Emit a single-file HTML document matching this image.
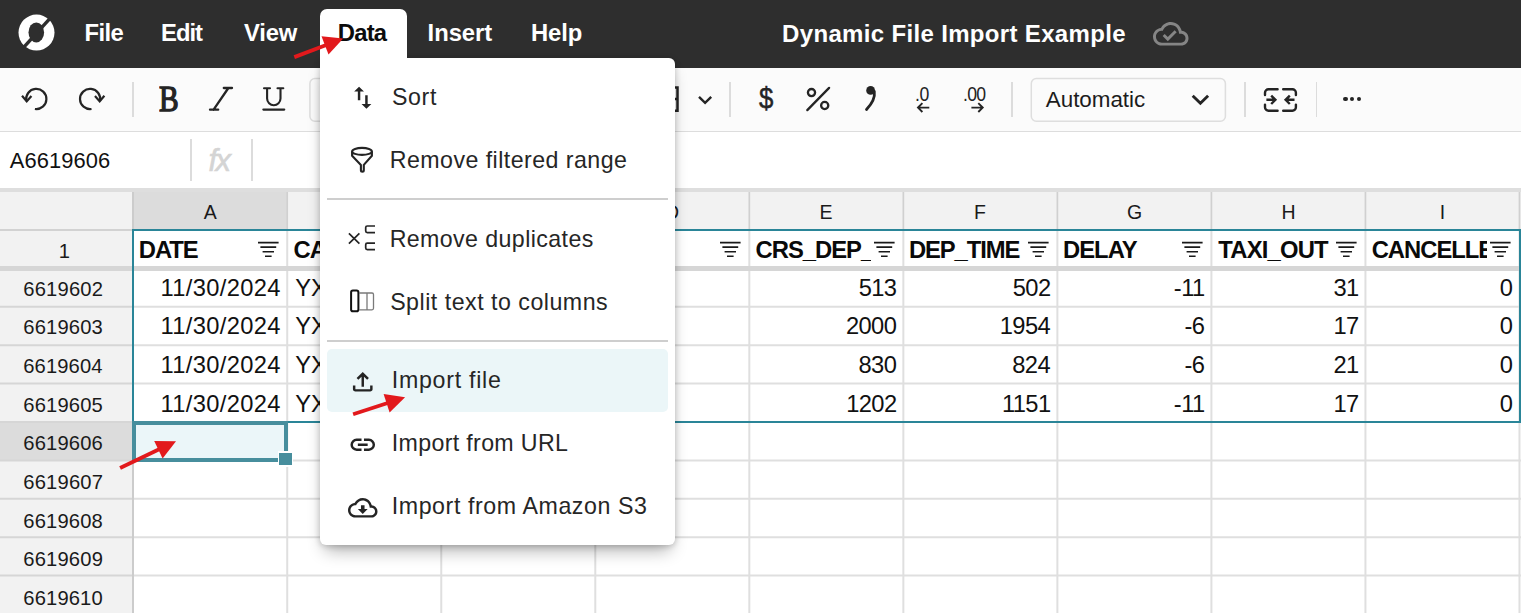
<!DOCTYPE html>
<html><head><meta charset="utf-8"><title>Dynamic File Import Example</title>
<style>
html,body{margin:0;padding:0;background:#fff;}
body{width:1521px;height:613px;overflow:hidden;position:relative;font-family:"Liberation Sans",sans-serif;}
.r{position:absolute;display:block;}
.t{position:absolute;white-space:nowrap;}
</style></head><body>
<div class="r" style="left:0px;top:0px;width:1521px;height:68px;background:#2e2e2e;"></div>
<svg class="r" style="left:16px;top:12px" width="42" height="42" viewBox="0 0 42 42">
<circle cx="20.5" cy="20.6" r="18" fill="#fff"/>
<ellipse cx="20.3" cy="20.4" rx="7.8" ry="10" fill="#2e2e2e"/>
<path d="M6.3 36.8 L34.7 5.6" stroke="#2e2e2e" stroke-width="3.4" fill="none"/>
</svg>
<div class="r" style="left:320px;top:9px;width:87px;height:62px;background:#fff;border-radius:7px 7px 0 0;"></div>
<div class="t" style="left:84.45px;top:17.00px;height:31px;line-height:31px;font-size:23.8px;color:#fff;font-weight:700;letter-spacing:-0.525px;">File</div>
<div class="t" style="left:161.05px;top:17.00px;height:31px;line-height:31px;font-size:23.8px;color:#fff;font-weight:700;letter-spacing:-1.013px;">Edit</div>
<div class="t" style="left:243.98px;top:17.00px;height:31px;line-height:31px;font-size:23.8px;color:#fff;font-weight:700;letter-spacing:-0.143px;">View</div>
<div class="t" style="left:337.85px;top:17.00px;height:31px;line-height:31px;font-size:23.8px;color:#0c0c0c;font-weight:700;letter-spacing:-0.773px;">Data</div>
<div class="t" style="left:427.55px;top:17.00px;height:31px;line-height:31px;font-size:23.8px;color:#fff;font-weight:700;letter-spacing:-0.022px;">Insert</div>
<div class="t" style="left:531.05px;top:17.00px;height:31px;line-height:31px;font-size:23.8px;color:#fff;font-weight:700;letter-spacing:-0.109px;">Help</div>
<div class="t" style="left:782.04px;top:18.00px;height:31px;line-height:31px;font-size:24px;color:#fff;font-weight:700;letter-spacing:0.338px;">Dynamic File Import Example</div>
<svg class="r" style="left:1153.3px;top:16.1px" width="35.5" height="35.5" viewBox="0 0 24 24" fill="#858585">
<path d="M19.35 10.04C18.67 6.59 15.64 4 12 4 9.11 4 6.6 5.64 5.35 8.04 2.34 8.36 0 10.91 0 14c0 3.31 2.69 6 6 6h13c2.76 0 5-2.24 5-5 0-2.64-2.05-4.78-4.65-4.96zM19 18H6c-2.21 0-4-1.79-4-4 0-2.05 1.53-3.76 3.56-3.97l1.07-.11.5-.95C8.08 7.14 9.94 6 12 6c2.62 0 4.88 1.86 5.39 4.43l.3 1.5 1.53.11c1.56.1 2.78 1.41 2.78 2.96 0 1.65-1.35 3-3 3zm-9-3.82l-2.090-2.090L6.5 13.5 10 17l6.010-6.010-1.410-1.410z"/>
</svg>
<div class="r" style="left:0px;top:68px;width:1521px;height:63px;background:#fbfbfb;"></div>
<div class="r" style="left:0px;top:131px;width:1521px;height:1px;background:#dddddd;"></div>
<div class="r" style="left:0px;top:132px;width:1521px;height:56px;background:#fff;"></div>
<div class="r" style="left:132.3px;top:82.2px;width:1.6px;height:34.6px;background:#dcdcdc;"></div>
<div class="r" style="left:729.1px;top:82.2px;width:1.6px;height:34.6px;background:#dcdcdc;"></div>
<div class="r" style="left:1011.2px;top:82.2px;width:1.6px;height:34.6px;background:#dcdcdc;"></div>
<div class="r" style="left:1244.3px;top:82.2px;width:1.6px;height:34.6px;background:#dcdcdc;"></div>
<div class="r" style="left:1315.9px;top:82.2px;width:1.4px;height:34.6px;background:#dcdcdc;"></div>
<svg class="r" style="left:0;top:68px" width="140" height="63" viewBox="0 68 140 63" fill="none" stroke="#242424" stroke-width="2.2" stroke-linecap="butt" stroke-linejoin="miter"><path d="M26.42 101.10 A10.1 10.1 0 1 1 34.89 109.00"/><path d="M22.02 95.80 L26.72 101.40 L31.42 96.10"/><path d="M99.98 101.10 A10.1 10.1 0 1 0 91.51 109.00"/><path d="M104.38 95.80 L99.68 101.40 L94.98 96.10"/></svg>
<div class="t" style="left:159.42px;top:76.00px;height:46px;line-height:46px;font-size:35.5px;color:#242424;font-family:'Liberation Serif',serif;transform:scaleX(.83);transform-origin:0 0;-webkit-text-stroke:1.4px #242424;">B</div>
<svg class="r" style="left:200px;top:80px" width="100" height="40" viewBox="200 80 100 40" fill="none" stroke="#242424" stroke-width="2.3" stroke-linecap="round">
<path d="M223.8 88 H232 M210 109.7 H218.2 M228.4 88 L213.6 109.7"/>
<path d="M267.1 88.3 V98.6 a6.7 6.7 0 0 0 13.4 0 V88.3 M264 88.3 H270 M277.5 88.3 H283.3" stroke-width="2.1"/>
<path d="M263.4 109.6 H284.2"/>
</svg>
<svg class="r" style="left:305px;top:74px" width="100" height="52" viewBox="305 74 100 52" fill="none" stroke="#dedede" stroke-width="1.5"><rect x="309.900" y="78.500" width="150" height="42.800" rx="5"/></svg>
<svg class="r" style="left:650px;top:80px" width="70" height="40" viewBox="650 80 70 40" fill="none" stroke="#242424" stroke-width="2.5" stroke-linejoin="miter">
<path d="M655 87.4 H677.5 V110.7 H655 M666 99.1 H677.5"/>
<path d="M699 96.8 L705.1 102.8 L711.2 96.8" stroke-width="2.4"/>
</svg>
<div class="t" style="left:758.90px;top:78.00px;height:39px;line-height:39px;font-size:30px;color:#242424;transform:scaleX(.86);transform-origin:0 0;-webkit-text-stroke:.5px #242424;">$</div>
<svg class="r" style="left:800px;top:80px" width="40" height="40" viewBox="800 80 40 40" fill="none" stroke="#242424" stroke-width="2.3" stroke-linecap="round">
<path d="M807.3 110.1 L829.1 87.9"/><circle cx="811.5" cy="92.6" r="3.6"/><circle cx="824.7" cy="105.5" r="3.6"/>
</svg>
<svg class="r" style="left:855px;top:80px" width="30" height="40" viewBox="855 80 30 40" fill="none" stroke="#242424" stroke-width="2.8" stroke-linecap="round">
<circle cx="870.6" cy="90.4" r="4.4" fill="#242424" stroke="none"/>
<path d="M874.3 91.500 C875.2 97.500 871.700 104 866.500 109.500"/>
</svg>
<div class="t" style="left:915.11px;top:80.00px;height:27px;line-height:27px;font-size:21px;color:#242424;letter-spacing:-0.400px;transform:scaleX(.84);transform-origin:0 0;">.0</div>
<div class="t" style="left:963.21px;top:80.00px;height:27px;line-height:27px;font-size:21px;color:#242424;letter-spacing:-0.900px;transform:scaleX(.84);transform-origin:0 0;">.00</div>
<svg class="r" style="left:910px;top:100px" width="90" height="16" viewBox="910 100 90 16" fill="none" stroke="#242424" stroke-width="1.9" stroke-linecap="butt" stroke-linejoin="miter">
<path d="M929.3 107.6 H918.4 M922.4 103.2 L918 107.6 L922.4 112"/>
<path d="M971.4 107.6 H982.3 M978.3 103.2 L982.7 107.6 L978.3 112"/>
</svg>
<svg class="r" style="left:1025px;top:74px" width="210" height="52" viewBox="1025 74 210 52" fill="none" stroke="#dedede" stroke-width="1.5"><rect x="1031.300" y="78.500" width="194.100" height="42.800" rx="5"/></svg>
<div class="t" style="left:1045.80px;top:85.00px;height:29px;line-height:29px;font-size:22.4px;color:#1c1c1c;letter-spacing:-0.020px;">Automatic</div>
<svg class="r" style="left:1185px;top:88px" width="30" height="24" viewBox="1185 88 30 24" fill="none" stroke="#242424" stroke-width="2.9" stroke-linejoin="miter">
<path d="M1192.7 95.8 L1200.4 103.3 L1208.1 95.8"/></svg>
<svg class="r" style="left:1260px;top:84px" width="42" height="32" viewBox="1260 84 42 32" fill="none" stroke="#242424" stroke-width="2.4" stroke-linecap="round" stroke-linejoin="round">
<path d="M1277.6 89.2 H1268.5 a3.5 3.5 0 0 0 -3.5 3.5 V95 M1265 104.6 V107.2 a3.5 3.5 0 0 0 3.500 3.500 H1277.6 M1283.2 89.2 H1292.4 a3.5 3.5 0 0 1 3.500 3.500 V95 M1295.900 104.600 V107.200 a3.500 3.500 0 0 1 -3.500 3.500 H1283.2"/>
<path d="M1266.4 99.8 H1275 M1271.2 95.600 L1275.400 99.800 L1271.200 104 M1294.5 99.8 H1286 M1289.8 95.600 L1285.600 99.800 L1289.800 104" stroke-linecap="butt" stroke-linejoin="miter"/>
</svg>
<div class="r" style="left:1343.2px;top:96.7px;width:4.6px;height:4.6px;background:#242424;border-radius:50%;"></div>
<div class="r" style="left:1349.8px;top:96.7px;width:4.6px;height:4.6px;background:#242424;border-radius:50%;"></div>
<div class="r" style="left:1356.5px;top:96.7px;width:4.6px;height:4.6px;background:#242424;border-radius:50%;"></div>
<div class="t" style="left:9.80px;top:147.00px;height:28px;line-height:28px;font-size:21.9px;color:#111;letter-spacing:0.067px;">A6619606</div>
<div class="r" style="left:190.1px;top:139.3px;width:1.5px;height:41.4px;background:#dcdcdc;"></div>
<div class="r" style="left:251.4px;top:139.3px;width:1.5px;height:41.4px;background:#dcdcdc;"></div>
<div class="t" style="left:208.39px;top:141.00px;height:40px;line-height:40px;font-size:31px;color:#d4d4d4;font-style:italic;letter-spacing:-1.525px;-webkit-text-stroke:.6px #d4d4d4;">fx</div>
<div class="r" style="left:0px;top:188px;width:1521px;height:4px;background:#dedede;"></div>
<div class="r" style="left:0px;top:192px;width:1521px;height:421px;background:#fff;"></div>
<div class="r" style="left:0px;top:192px;width:132.4px;height:421px;background:#f2f2f2;"></div>
<div class="r" style="left:0px;top:192px;width:1521px;height:37px;background:#f2f2f2;"></div>
<div class="r" style="left:133px;top:192px;width:154.5px;height:37px;background:#dcdcdc;"></div>
<div class="r" style="left:0px;top:422px;width:132.4px;height:38.5px;background:#dcdcdc;"></div>
<svg class="r" style="left:0;top:0" width="1521" height="613" viewBox="0 0 1521 613" fill="none" stroke-width="2"><path d="M132 306.80 H1521" stroke="#dfdfdf"/><path d="M0 306.80 H132" stroke="#d6d6d6"/><path d="M132 345.20 H1521" stroke="#dfdfdf"/><path d="M0 345.20 H132" stroke="#d6d6d6"/><path d="M132 383.60 H1521" stroke="#dfdfdf"/><path d="M0 383.60 H132" stroke="#d6d6d6"/><path d="M132 422.00 H1521" stroke="#dfdfdf"/><path d="M0 422.00 H132" stroke="#d6d6d6"/><path d="M132 460.40 H1521" stroke="#dfdfdf"/><path d="M0 460.40 H132" stroke="#d6d6d6"/><path d="M132 498.80 H1521" stroke="#dfdfdf"/><path d="M0 498.80 H132" stroke="#d6d6d6"/><path d="M132 537.20 H1521" stroke="#dfdfdf"/><path d="M0 537.20 H132" stroke="#d6d6d6"/><path d="M132 575.60 H1521" stroke="#dfdfdf"/><path d="M0 575.60 H132" stroke="#d6d6d6"/><path d="M132 614.00 H1521" stroke="#dfdfdf"/><path d="M0 614.00 H132" stroke="#d6d6d6"/><path d="M287.23 231 V613" stroke="#dfdfdf"/><path d="M287.23 192 V229" stroke="#d0d0d0" stroke-width="1.7"/><path d="M441.26 231 V613" stroke="#dfdfdf"/><path d="M441.26 192 V229" stroke="#d0d0d0" stroke-width="1.7"/><path d="M595.29 231 V613" stroke="#dfdfdf"/><path d="M595.29 192 V229" stroke="#d0d0d0" stroke-width="1.7"/><path d="M749.32 231 V613" stroke="#dfdfdf"/><path d="M749.32 192 V229" stroke="#d0d0d0" stroke-width="1.7"/><path d="M903.35 231 V613" stroke="#dfdfdf"/><path d="M903.35 192 V229" stroke="#d0d0d0" stroke-width="1.7"/><path d="M1057.38 231 V613" stroke="#dfdfdf"/><path d="M1057.38 192 V229" stroke="#d0d0d0" stroke-width="1.7"/><path d="M1211.41 231 V613" stroke="#dfdfdf"/><path d="M1211.41 192 V229" stroke="#d0d0d0" stroke-width="1.7"/><path d="M1365.44 231 V613" stroke="#dfdfdf"/><path d="M1365.44 192 V229" stroke="#d0d0d0" stroke-width="1.7"/><path d="M1519.47 231 V613" stroke="#dfdfdf"/><path d="M1519.47 192 V229" stroke="#d0d0d0" stroke-width="1.7"/></svg>
<div class="r" style="left:0px;top:229px;width:133px;height:2px;background:#d2d2d2;"></div>
<div class="r" style="left:132px;top:192px;width:2px;height:421px;background:#cccccc;"></div>
<div class="r" style="left:0px;top:266px;width:1521px;height:4.9px;background:#d6d6d6;"></div>
<div class="r" style="left:132px;top:229px;width:1389px;height:194px;background:transparent;border:2px solid #2a8598;box-sizing:border-box;"></div>
<div class="r" style="left:132px;top:421px;width:156px;height:41px;background:#ebf6f9;border:4px solid #478e9d;box-sizing:border-box;"></div>
<div class="r" style="left:278px;top:451px;width:15px;height:15.5px;background:#fff;"></div>
<div class="r" style="left:279px;top:453px;width:13px;height:12px;background:#478e9d;"></div>
<div class="t" style="left:203.73px;top:200.00px;height:25px;line-height:25px;font-size:19.5px;color:#1a1a1a;">A</div>
<div class="t" style="left:664.94px;top:200.00px;height:25px;line-height:25px;font-size:19.5px;color:#1a1a1a;">D</div>
<div class="t" style="left:819.46px;top:200.00px;height:25px;line-height:25px;font-size:19.5px;color:#1a1a1a;">E</div>
<div class="t" style="left:974.00px;top:200.00px;height:25px;line-height:25px;font-size:19.5px;color:#1a1a1a;">F</div>
<div class="t" style="left:1127.03px;top:200.00px;height:25px;line-height:25px;font-size:19.5px;color:#1a1a1a;">G</div>
<div class="t" style="left:1281.38px;top:200.00px;height:25px;line-height:25px;font-size:19.5px;color:#1a1a1a;">H</div>
<div class="t" style="left:1439.75px;top:200.00px;height:25px;line-height:25px;font-size:19.5px;color:#1a1a1a;">I</div>
<div class="t" style="left:58.69px;top:238.00px;height:26px;line-height:26px;font-size:20.2px;color:#1a1a1a;">1</div>
<div class="t" style="left:23.29px;top:276.00px;height:26px;line-height:26px;font-size:20.2px;color:#1a1a1a;letter-spacing:0.174px;">6619602</div>
<div class="t" style="left:23.29px;top:314.00px;height:26px;line-height:26px;font-size:20.2px;color:#1a1a1a;letter-spacing:0.157px;">6619603</div>
<div class="t" style="left:23.29px;top:353.00px;height:26px;line-height:26px;font-size:20.2px;color:#1a1a1a;letter-spacing:0.106px;">6619604</div>
<div class="t" style="left:23.29px;top:392.00px;height:26px;line-height:26px;font-size:20.2px;color:#1a1a1a;letter-spacing:0.148px;">6619605</div>
<div class="t" style="left:23.29px;top:430.00px;height:26px;line-height:26px;font-size:20.2px;color:#1a1a1a;letter-spacing:0.157px;">6619606</div>
<div class="t" style="left:23.29px;top:469.00px;height:26px;line-height:26px;font-size:20.2px;color:#1a1a1a;letter-spacing:0.174px;">6619607</div>
<div class="t" style="left:23.29px;top:508.00px;height:26px;line-height:26px;font-size:20.2px;color:#1a1a1a;letter-spacing:0.148px;">6619608</div>
<div class="t" style="left:23.29px;top:546.00px;height:26px;line-height:26px;font-size:20.2px;color:#1a1a1a;letter-spacing:0.165px;">6619609</div>
<div class="t" style="left:23.29px;top:585.00px;height:26px;line-height:26px;font-size:20.2px;color:#1a1a1a;letter-spacing:0.140px;">6619610</div>
<div class="t" style="left:138.85px;top:234.00px;height:31px;line-height:31px;width:115.55px;overflow:hidden;font-size:23.8px;font-weight:700;color:#0a0a0a;letter-spacing:-1.057px;">DATE</div>
<svg class="r" style="left:258.1px;top:240px" width="22" height="20" viewBox="0 0 22 20" stroke="#1a1a1a" stroke-width="1.6" fill="none"><path d="M0 2.6 H20.6 M2.4 7.1 H18.2 M4.6 11.7 H16 M7 16.2 H13.6"/></svg>
<div class="t" style="left:293.48px;top:234.00px;height:31px;line-height:31px;width:114.95px;overflow:hidden;font-size:23.8px;font-weight:700;color:#0a0a0a;letter-spacing:-1.000px;">CARRIER</div>
<svg class="r" style="left:412.1px;top:240px" width="22" height="20" viewBox="0 0 22 20" stroke="#1a1a1a" stroke-width="1.6" fill="none"><path d="M0 2.6 H20.6 M2.4 7.1 H18.2 M4.6 11.7 H16 M7 16.2 H13.6"/></svg>
<div class="t" style="left:447.51px;top:234.00px;height:31px;line-height:31px;width:114.95px;overflow:hidden;font-size:23.8px;font-weight:700;color:#0a0a0a;letter-spacing:-1.000px;">ORIGIN</div>
<svg class="r" style="left:566.2px;top:240px" width="22" height="20" viewBox="0 0 22 20" stroke="#1a1a1a" stroke-width="1.6" fill="none"><path d="M0 2.6 H20.6 M2.4 7.1 H18.2 M4.6 11.7 H16 M7 16.2 H13.6"/></svg>
<div class="t" style="left:600.94px;top:234.00px;height:31px;line-height:31px;width:115.55px;overflow:hidden;font-size:23.8px;font-weight:700;color:#0a0a0a;letter-spacing:-1.000px;">DEST</div>
<svg class="r" style="left:720.2px;top:240px" width="22" height="20" viewBox="0 0 22 20" stroke="#1a1a1a" stroke-width="1.6" fill="none"><path d="M0 2.6 H20.6 M2.4 7.1 H18.2 M4.6 11.7 H16 M7 16.2 H13.6"/></svg>
<div class="t" style="left:755.57px;top:234.00px;height:31px;line-height:31px;width:114.95px;overflow:hidden;font-size:23.8px;font-weight:700;color:#0a0a0a;letter-spacing:-1.000px;">CRS_DEP_T</div>
<svg class="r" style="left:874.2px;top:240px" width="22" height="20" viewBox="0 0 22 20" stroke="#1a1a1a" stroke-width="1.6" fill="none"><path d="M0 2.6 H20.6 M2.4 7.1 H18.2 M4.6 11.7 H16 M7 16.2 H13.6"/></svg>
<div class="t" style="left:909.00px;top:234.00px;height:31px;line-height:31px;width:115.55px;overflow:hidden;font-size:23.8px;font-weight:700;color:#0a0a0a;letter-spacing:-1.103px;">DEP_TIME</div>
<svg class="r" style="left:1028.2px;top:240px" width="22" height="20" viewBox="0 0 22 20" stroke="#1a1a1a" stroke-width="1.6" fill="none"><path d="M0 2.6 H20.6 M2.4 7.1 H18.2 M4.6 11.7 H16 M7 16.2 H13.6"/></svg>
<div class="t" style="left:1063.03px;top:234.00px;height:31px;line-height:31px;width:115.55px;overflow:hidden;font-size:23.8px;font-weight:700;color:#0a0a0a;letter-spacing:-0.994px;">DELAY</div>
<svg class="r" style="left:1182.3px;top:240px" width="22" height="20" viewBox="0 0 22 20" stroke="#1a1a1a" stroke-width="1.6" fill="none"><path d="M0 2.6 H20.6 M2.4 7.1 H18.2 M4.6 11.7 H16 M7 16.2 H13.6"/></svg>
<div class="t" style="left:1218.37px;top:234.00px;height:31px;line-height:31px;width:114.24px;overflow:hidden;font-size:23.8px;font-weight:700;color:#0a0a0a;letter-spacing:-0.813px;">TAXI_OUT</div>
<svg class="r" style="left:1336.3px;top:240px" width="22" height="20" viewBox="0 0 22 20" stroke="#1a1a1a" stroke-width="1.6" fill="none"><path d="M0 2.6 H20.6 M2.4 7.1 H18.2 M4.6 11.7 H16 M7 16.2 H13.6"/></svg>
<div class="t" style="left:1371.69px;top:234.00px;height:31px;line-height:31px;width:114.95px;overflow:hidden;font-size:23.8px;font-weight:700;color:#0a0a0a;letter-spacing:-1.000px;">CANCELLED</div>
<svg class="r" style="left:1490.3px;top:240px" width="22" height="20" viewBox="0 0 22 20" stroke="#1a1a1a" stroke-width="1.6" fill="none"><path d="M0 2.6 H20.6 M2.4 7.1 H18.2 M4.6 11.7 H16 M7 16.2 H13.6"/></svg>
<div class="t" style="left:160.52px;top:273.00px;height:31px;line-height:31px;font-size:23.7px;color:#111;letter-spacing:0.354px;">11/30/2024</div>
<div class="t" style="left:295.16px;top:273.00px;height:31px;line-height:31px;font-size:23.7px;color:#111;">YX</div>
<div class="t" style="left:858.64px;top:273.00px;height:31px;line-height:31px;font-size:23.7px;color:#111;letter-spacing:-0.600px;">513</div>
<div class="t" style="left:1012.79px;top:273.00px;height:31px;line-height:31px;font-size:23.7px;color:#111;letter-spacing:-0.600px;">502</div>
<div class="t" style="left:1173.87px;top:273.00px;height:31px;line-height:31px;font-size:23.7px;color:#111;letter-spacing:-0.600px;">-11</div>
<div class="t" style="left:1333.46px;top:273.00px;height:31px;line-height:31px;font-size:23.7px;color:#111;letter-spacing:-0.600px;">31</div>
<div class="t" style="left:1499.81px;top:273.00px;height:31px;line-height:31px;font-size:23.7px;color:#111;letter-spacing:-0.600px;">0</div>
<div class="t" style="left:160.52px;top:311.00px;height:31px;line-height:31px;font-size:23.7px;color:#111;letter-spacing:0.354px;">11/30/2024</div>
<div class="t" style="left:295.16px;top:311.00px;height:31px;line-height:31px;font-size:23.7px;color:#111;">YX</div>
<div class="t" style="left:845.97px;top:311.00px;height:31px;line-height:31px;font-size:23.7px;color:#111;letter-spacing:-0.600px;">2000</div>
<div class="t" style="left:999.76px;top:311.00px;height:31px;line-height:31px;font-size:23.7px;color:#111;letter-spacing:-0.600px;">1954</div>
<div class="t" style="left:1184.58px;top:311.00px;height:31px;line-height:31px;font-size:23.7px;color:#111;letter-spacing:-0.600px;">-6</div>
<div class="t" style="left:1333.46px;top:311.00px;height:31px;line-height:31px;font-size:23.7px;color:#111;letter-spacing:-0.600px;">17</div>
<div class="t" style="left:1499.81px;top:311.00px;height:31px;line-height:31px;font-size:23.7px;color:#111;letter-spacing:-0.600px;">0</div>
<div class="t" style="left:160.52px;top:350.00px;height:31px;line-height:31px;font-size:23.7px;color:#111;letter-spacing:0.354px;">11/30/2024</div>
<div class="t" style="left:295.16px;top:350.00px;height:31px;line-height:31px;font-size:23.7px;color:#111;">YX</div>
<div class="t" style="left:858.52px;top:350.00px;height:31px;line-height:31px;font-size:23.7px;color:#111;letter-spacing:-0.600px;">830</div>
<div class="t" style="left:1012.31px;top:350.00px;height:31px;line-height:31px;font-size:23.7px;color:#111;letter-spacing:-0.600px;">824</div>
<div class="t" style="left:1184.58px;top:350.00px;height:31px;line-height:31px;font-size:23.7px;color:#111;letter-spacing:-0.600px;">-6</div>
<div class="t" style="left:1333.46px;top:350.00px;height:31px;line-height:31px;font-size:23.7px;color:#111;letter-spacing:-0.600px;">21</div>
<div class="t" style="left:1499.81px;top:350.00px;height:31px;line-height:31px;font-size:23.7px;color:#111;letter-spacing:-0.600px;">0</div>
<div class="t" style="left:160.52px;top:389.00px;height:31px;line-height:31px;font-size:23.7px;color:#111;letter-spacing:0.354px;">11/30/2024</div>
<div class="t" style="left:295.16px;top:389.00px;height:31px;line-height:31px;font-size:23.7px;color:#111;">YX</div>
<div class="t" style="left:846.20px;top:389.00px;height:31px;line-height:31px;font-size:23.7px;color:#111;letter-spacing:-0.600px;">1202</div>
<div class="t" style="left:1001.95px;top:389.00px;height:31px;line-height:31px;font-size:23.7px;color:#111;letter-spacing:-0.600px;">1151</div>
<div class="t" style="left:1173.87px;top:389.00px;height:31px;line-height:31px;font-size:23.7px;color:#111;letter-spacing:-0.600px;">-11</div>
<div class="t" style="left:1333.46px;top:389.00px;height:31px;line-height:31px;font-size:23.7px;color:#111;letter-spacing:-0.600px;">17</div>
<div class="t" style="left:1499.81px;top:389.00px;height:31px;line-height:31px;font-size:23.7px;color:#111;letter-spacing:-0.600px;">0</div>
<div class="r" style="left:319.8px;top:58px;width:355.2px;height:486.6px;background:#fff;border-radius:0 6px 6px 6px;box-shadow:0 10px 17px -5px rgba(0,0,0,.33),0 1px 6px rgba(0,0,0,.20);"></div>
<div class="r" style="left:320px;top:52px;width:87px;height:14px;background:#fff;"></div>
<div class="r" style="left:327px;top:198px;width:341px;height:2px;background:#cecece;"></div>
<div class="r" style="left:327px;top:340px;width:341px;height:2px;background:#cecece;"></div>
<div class="r" style="left:327px;top:349.2px;width:341.4px;height:62.7px;background:#ebf6f8;border-radius:5px;"></div>
<div class="t" style="left:392.06px;top:82.00px;height:30px;line-height:30px;font-size:23.2px;color:#262626;letter-spacing:0.582px;">Sort</div>
<div class="t" style="left:389.84px;top:145.00px;height:30px;line-height:30px;font-size:23.2px;color:#262626;letter-spacing:0.446px;">Remove filtered range</div>
<div class="t" style="left:389.64px;top:224.00px;height:30px;line-height:30px;font-size:23.2px;color:#262626;letter-spacing:0.403px;">Remove duplicates</div>
<div class="t" style="left:390.16px;top:287.00px;height:30px;line-height:30px;font-size:23.2px;color:#262626;letter-spacing:0.499px;">Split text to columns</div>
<div class="t" style="left:391.71px;top:365.00px;height:30px;line-height:30px;font-size:23.2px;color:#262626;letter-spacing:0.733px;">Import file</div>
<div class="t" style="left:391.71px;top:428.00px;height:30px;line-height:30px;font-size:23.2px;color:#262626;letter-spacing:0.345px;">Import from URL</div>
<div class="t" style="left:391.71px;top:491.00px;height:30px;line-height:30px;font-size:23.2px;color:#262626;letter-spacing:0.586px;">Import from Amazon S3</div>
<svg class="r" style="left:348.2px;top:83.1px" width="29.5" height="29.5" viewBox="0 0 24 24" fill="#242424" ><path d="M16 17.01V10h-2v7.01h-3L15 21l4-3.990h-3zM9 3L5 6.990h3V14h2V6.990h3L9 3z"/></svg>
<svg class="r" style="left:345px;top:142px" width="36" height="36" viewBox="345 142 36 36" fill="none" stroke="#242424" stroke-width="2.1" stroke-linejoin="round">
<ellipse cx="362" cy="151.400" rx="9.900" ry="3.500"/>
<path d="M352.100 151.400 V155.800 L360.900 164.900 V170.200 a1.450 1.450 0 0 0 2.900 0 V164.900 L371.900 155.800 V151.400"/>
</svg>
<svg class="r" style="left:345px;top:220px" width="36" height="36" viewBox="345 220 36 36" fill="none" stroke="#242424" stroke-width="1.7" stroke-linecap="butt">
<path d="M348.900 233.400 L359.400 243.700 M359.400 233.400 L348.900 243.700"/>
<path d="M375 226 H367.300 a1.600 1.600 0 0 0 -1.600 1.600 V231 a1.600 1.600 0 0 0 1.600 1.600 H375 M375 243.100 H367.300 a1.600 1.600 0 0 0 -1.600 1.600 V248.100 a1.600 1.600 0 0 0 1.600 1.600 H375"/>
</svg>
<svg class="r" style="left:345px;top:285px" width="36" height="32" viewBox="345 285 36 32" fill="none">
<path d="M359.500 293 H372 a1.500 1.500 0 0 1 1.500 1.500 V308.300 a1.500 1.500 0 0 1 -1.500 1.500 H359.500 M367 293 V309.800" stroke="#7a7a7a" stroke-width="1.300"/>
<rect x="351.100" y="290.600" width="7.300" height="20.600" rx="1.800" stroke="#111" stroke-width="2"/>
</svg>
<svg class="r" style="left:348.2px;top:367.1px" width="29.5" height="29.5" viewBox="0 0 24 24" fill="#242424" ><path d="M11 16V7.850l-2.600 2.600L7 9l5-5 5 5-1.400 1.450-2.600-2.600V16h-2Zm-5 4q-.825 0-1.413-.587Q4 18.825 4 18v-3h2v3h12v-3h2v3q0 .825-.587 1.413Q18.825 20 18 20H6Z"/></svg>
<svg class="r" style="left:348.2px;top:430.1px" width="29.5" height="29.5" viewBox="0 0 24 24" fill="#242424" ><path d="M11 17H7q-2.075 0-3.537-1.463Q2 14.075 2 12t1.463-3.538Q4.925 7 7 7h4v2H7q-1.250 0-2.125.875T4 12q0 1.250.875 2.125T7 15h4v2Zm-3-4v-2h8v2H8Zm5 4v-2h4q1.250 0 2.125-.875T20 12q0-1.250-.875-2.125T17 9h-4V7h4q2.075 0 3.538 1.462Q22 9.925 22 12q0 2.075-1.462 3.537Q19.075 17 17 17h-4Z"/></svg>
<svg class="r" style="left:348.2px;top:493.2px" width="29.5" height="29.5" viewBox="0 0 24 24" fill="#242424" ><path d="M19.350 10.040C18.670 6.590 15.640 4 12 4 9.110 4 6.600 5.640 5.350 8.040 2.340 8.360 0 10.910 0 14c0 3.310 2.690 6 6 6h13c2.760 0 5-2.240 5-5 0-2.640-2.050-4.780-4.650-4.960zM19 18H6c-2.210 0-4-1.790-4-4 0-2.050 1.530-3.760 3.560-3.970l1.070-.11.5-.95C8.080 7.140 9.940 6 12 6c2.620 0 4.880 1.860 5.390 4.430l.3 1.500 1.530.11c1.560.1 2.780 1.410 2.780 2.960 0 1.650-1.350 3-3 3zm-5.550-8h-2.900v3H8l4 4 4-4h-2.550z"/></svg>
<svg class="r" style="left:0;top:0;z-index:50" width="1521" height="613" viewBox="0 0 1521 613"><path d="M294.3 57.1 L326.9 44.7" stroke="#e2191c" stroke-width="3.8" stroke-linecap="butt"/><polygon points="343.2,38.4 328.5,54.4 321.5,36.3" fill="#e2191c"/><path d="M353.1 414.3 L388.5 402.7" stroke="#e2191c" stroke-width="3.8" stroke-linecap="butt"/><polygon points="405.1,397.3 389.6,412.6 383.6,394.1" fill="#e2191c"/><path d="M120.1 468 L160.2 448.8" stroke="#e2191c" stroke-width="3.8" stroke-linecap="butt"/><polygon points="176.0,441.3 162.6,458.5 154.2,441.0" fill="#e2191c"/></svg>
</body></html>
